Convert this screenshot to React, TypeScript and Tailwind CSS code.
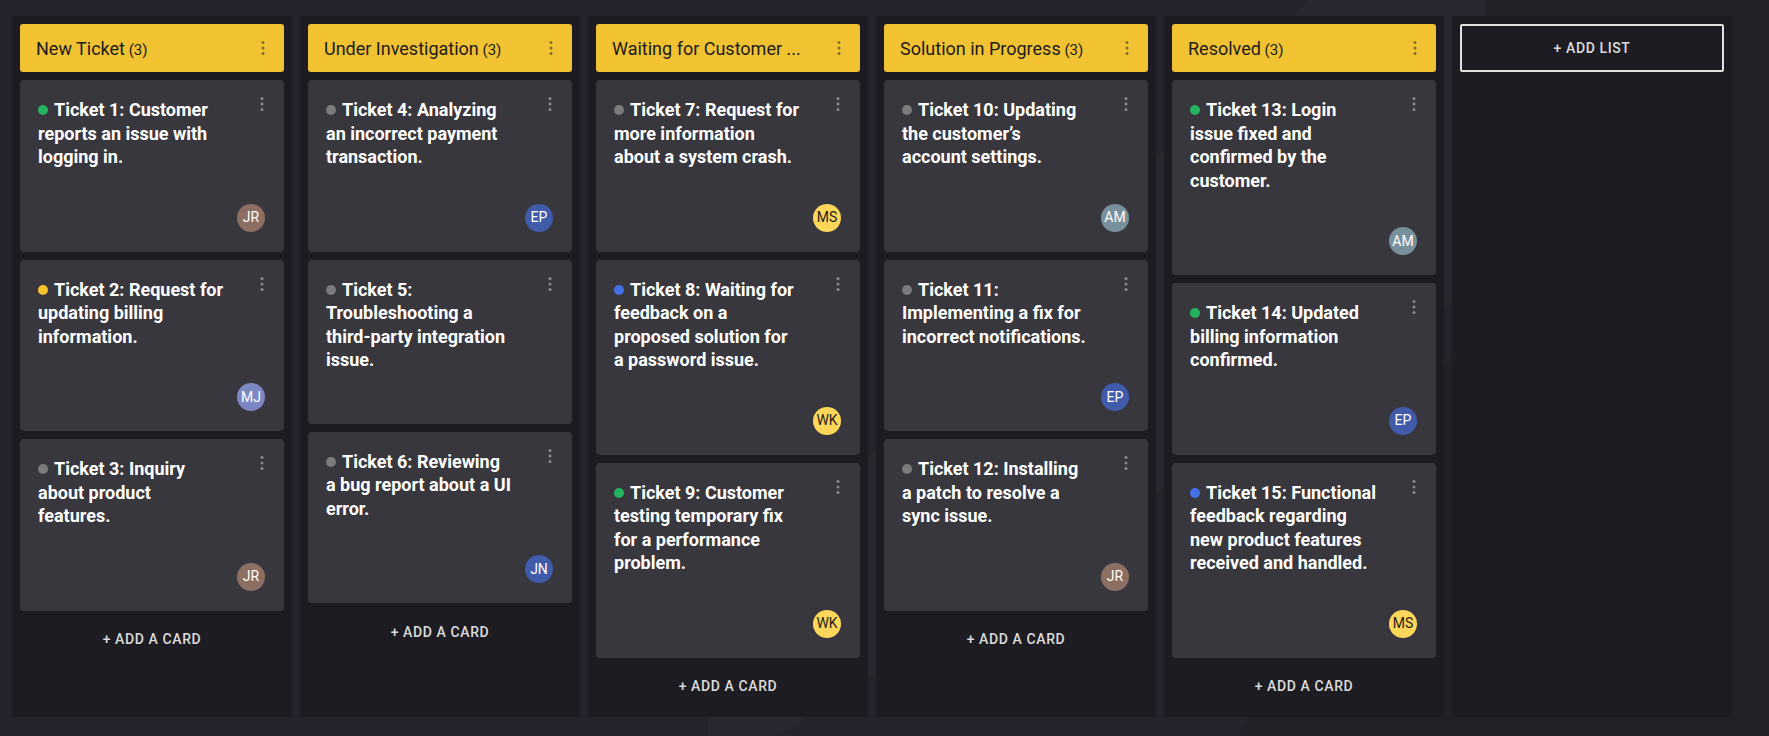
import React from 'react';

type Ticket = {
  id: number;
  text: string;
  dot: string;
  who?: string;
};

type List = {
  title: string;
  count?: number;
  tickets: Ticket[];
};

const avatarColors: Record<string, string> = {
  JR: 'bg-[#8d6e63] text-white',
  EP: 'bg-[#3f5ba9] text-white',
  MJ: 'bg-[#7c87c4] text-white',
  MS: 'bg-[#fdd65a] text-[#1d1d1d]',
  AM: 'bg-[#78909c] text-white',
  WK: 'bg-[#fdd65a] text-[#1d1d1d]',
  JN: 'bg-[#3f5ba9] text-white',
};

const dots: Record<string, string> = {
  green: 'bg-[#25b35f]',
  yellow: 'bg-[#f6c32c]',
  gray: 'bg-[#7b7b7e]',
  blue: 'bg-[#4472e6]',
};

const lists: List[] = [
  {
    title: 'New Ticket',
    count: 3,
    tickets: [
      { id: 1, text: 'Ticket 1: Customer reports an issue with logging in.', dot: 'green', who: 'JR' },
      { id: 2, text: 'Ticket 2: Request for updating billing information.', dot: 'yellow', who: 'MJ' },
      { id: 3, text: 'Ticket 3: Inquiry about product features.', dot: 'gray', who: 'JR' },
    ],
  },
  {
    title: 'Under Investigation',
    count: 3,
    tickets: [
      { id: 4, text: 'Ticket 4: Analyzing an incorrect payment transaction.', dot: 'gray', who: 'EP' },
      { id: 5, text: 'Ticket 5: Troubleshooting a third-party integration issue.', dot: 'gray' },
      { id: 6, text: 'Ticket 6: Reviewing a bug report about a UI error.', dot: 'gray', who: 'JN' },
    ],
  },
  {
    title: 'Waiting for Customer ...',
    tickets: [
      { id: 7, text: 'Ticket 7: Request for more information about a system crash.', dot: 'gray', who: 'MS' },
      { id: 8, text: 'Ticket 8: Waiting for feedback on a proposed solution for a password issue.', dot: 'blue', who: 'WK' },
      { id: 9, text: 'Ticket 9: Customer testing temporary fix for a performance problem.', dot: 'green', who: 'WK' },
    ],
  },
  {
    title: 'Solution in Progress',
    count: 3,
    tickets: [
      { id: 10, text: 'Ticket 10: Updating the customer\u2019s account settings.', dot: 'gray', who: 'AM' },
      { id: 11, text: 'Ticket 11: Implementing a fix for incorrect notifications.', dot: 'gray', who: 'EP' },
      { id: 12, text: 'Ticket 12: Installing a patch to resolve a sync issue.', dot: 'gray', who: 'JR' },
    ],
  },
  {
    title: 'Resolved',
    count: 3,
    tickets: [
      { id: 13, text: 'Ticket 13: Login issue fixed and confirmed by the customer.', dot: 'green', who: 'AM' },
      { id: 14, text: 'Ticket 14: Updated billing information confirmed.', dot: 'green', who: 'EP' },
      { id: 15, text: 'Ticket 15: Functional feedback regarding new product features received and handled.', dot: 'blue', who: 'MS' },
    ],
  },
];

const Kebab = ({ className }: { className: string }) => (
  <svg width="4" height="16" viewBox="0 0 4 16" className={className} fill="currentColor">
    <circle cx="2" cy="2.5" r="1.5" />
    <circle cx="2" cy="8" r="1.5" />
    <circle cx="2" cy="13.5" r="1.5" />
  </svg>
);

const TicketCard = ({ t }: { t: Ticket }) => (
  <div className="bg-[#39373e] rounded-[4px] flex flex-col">
    <div className="flex justify-between pl-[18px] pr-[20px]">
      <p className="w-[186px] pt-[18px] text-[18px] leading-[23.5px] font-bold text-white">
        <span className={`inline-block w-2.5 h-2.5 rounded-full mr-[6px] align-[1px] ${dots[t.dot]}`} />
        {t.text}
      </p>
      <div className="pt-[16px]">
        <Kebab className="text-[#8b8a8f]" />
      </div>
    </div>
    {t.who ? (
      <div className="flex justify-end pr-[19px] mt-[35px] mb-5">
        <div
          className={`w-7 h-7 rounded-full flex items-center justify-center text-[14px] ${avatarColors[t.who]}`}
        >
          {t.who}
        </div>
      </div>
    ) : (
      <div className="h-[52px]" />
    )}
  </div>
);

const Column = ({ list }: { list: List }) => (
  <div className="w-[280px] shrink-0 bg-[#1d1c23] p-2 flex flex-col gap-2">
    <div className="h-12 rounded-[3px] bg-[#f1c232] flex items-center justify-between pl-4 pr-[19px]">
      <div className="truncate text-[18px] text-[#1b1b1b]">
        {list.title}
        {list.count !== undefined && <span className="text-[15px]"> ({list.count})</span>}
      </div>
      <Kebab className="text-[#8a6c1c] shrink-0" />
    </div>
    {list.tickets.map((t) => (
      <TicketCard key={t.id} t={t} />
    ))}
    <button className="h-[42px] text-[14px] font-medium tracking-[0.6px] text-[#dcdcdc]">+ ADD A CARD</button>
  </div>
);

export default function App() {
  return (
    <div
      className="relative w-full h-[736px] overflow-hidden bg-[#25242c]"
      style={{ fontFamily: 'Roboto, "Liberation Sans", sans-serif' }}
    >
      {/* faint diagonal panels in the backdrop */}
      <div className="absolute inset-0 pointer-events-none">
        <div className="absolute inset-0 bg-[#2b2a32] [clip-path:polygon(74%_0,84%_0,84%_38%,44%_100%,40%_100%,40%_85%)] opacity-70" />
        <div className="absolute inset-0 bg-[#202027] [clip-path:polygon(84%_0,100%_0,100%_100%,70%_100%,84%_40%)] opacity-60" />
      </div>
      <div className="relative flex items-stretch gap-2 pl-3 pt-4 h-[717px]">
        {lists.map((l) => (
          <Column key={l.title} list={l} />
        ))}
        <div className="w-[280px] shrink-0 bg-[#1d1c23] p-2">
          <button className="w-full h-12 border-2 border-[#e2e2e2] rounded-[2px] text-[14px] font-medium tracking-[0.6px] text-[#dcdcdc]">
            + ADD LIST
          </button>
        </div>
      </div>
    </div>
  );
}
